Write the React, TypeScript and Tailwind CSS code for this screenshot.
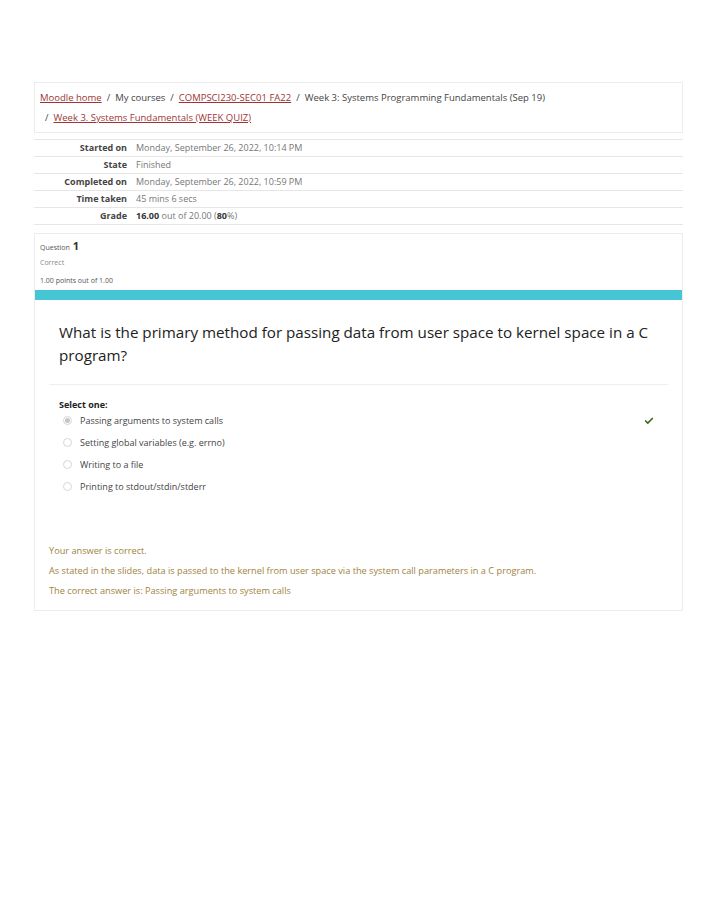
import { Check } from "lucide-react";

const font = { fontFamily: '"Open Sans", "Noto Sans", sans-serif' };

const summary: [string, React.ReactNode][] = [
  ["Started on", "Monday, September 26, 2022, 10:14 PM"],
  ["State", "Finished"],
  ["Completed on", "Monday, September 26, 2022, 10:59 PM"],
  ["Time taken", "45 mins 6 secs"],
  [
    "Grade",
    <>
      <b className="font-bold text-[#333]">16.00</b> out of 20.00 (<b className="font-bold text-[#333]">80</b>%)
    </>,
  ],
];

const options = [
  "Passing arguments to system calls",
  "Setting global variables (e.g. errno)",
  "Writing to a file",
  "Printing to stdout/stdin/stderr",
];

function Radio({ checked }: { checked: boolean }) {
  return (
    <span className="flex h-[9px] w-[9px] items-center justify-center rounded-full border border-[#d6d6d6] bg-white">
      {checked && <span className="h-[5px] w-[5px] rounded-full bg-[#c4c4c4]" />}
    </span>
  );
}

export default function App() {
  return (
    <div className="min-h-[918px] w-[714px] bg-white text-[#4a4a4a]" style={font}>
      <div className="pl-[34px] pr-[31px] pt-[82px]">
        <nav className="border border-[#ececec] px-[5px] pt-[5px] pb-[4px] text-[9.5px] leading-[20px] text-[#444]">
          <div>
            <a className="text-[#9e3535] underline">Moodle home</a>
            <span className="mx-[5px]">/</span>
            My courses
            <span className="mx-[5px]">/</span>
            <a className="text-[#9e3535] underline">COMPSCI230-SEC01 FA22</a>
            <span className="mx-[5px]">/</span>
            Week 3: Systems Programming Fundamentals (Sep 19)
          </div>
          <div>
            <span className="mx-[5px]">/</span>
            <a className="text-[#9e3535] underline">Week 3. Systems Fundamentals (WEEK QUIZ)</a>
          </div>
        </nav>

        <table className="mt-[6px] w-full border-t border-[#e6e6e6] text-[9px]">
          <tbody>
            {summary.map(([k, v]) => (
              <tr key={k} className="h-[17px] border-b border-[#e6e6e6]">
                <th className="w-[102px] pr-[9px] text-right font-bold text-[#444]">{k}</th>
                <td className="text-[#777]">{v}</td>
              </tr>
            ))}
          </tbody>
        </table>

        <div className="mt-[8px] border border-[#ececec]">
          <div className="px-[5px] pt-[6px] pb-[6px] text-[7px] leading-none text-[#555]">
            <div className="flex items-baseline gap-[3px]">
              Question <span className="text-[11px] font-bold text-[#333]">1</span>
            </div>
            <div className="mt-[8px] text-[#888]">Correct</div>
            <div className="mt-[11px]">1.00 points out of 1.00</div>
          </div>
          <div className="h-[10px] bg-[#46c6d5]" />
          <div className="px-[14px] pb-[12px]">
            <div className="px-[10px] pt-[21px] pb-[17px] text-[15.2px] leading-[23px] text-[#222]">
              What is the primary method for passing data from user space to kernel space in a C program?
            </div>
            <div className="border-t border-[#eeeeee] px-[10px] pt-[13px]">
              <div className="text-[9px] font-bold text-[#222]">Select one:</div>
              <div className="-mt-[2px] flex flex-col">
                {options.map((o, i) => (
                  <div key={o} className="flex h-[22px] items-center text-[9px] text-[#444]">
                    <span className="ml-[4px] mr-[8px]">
                      <Radio checked={i === 0} />
                    </span>
                    <span className="flex-1">{o}</span>
                    {i === 0 && <Check className="mr-[4px] h-[10px] w-[10px] text-[#3b6b22]" strokeWidth={4} />}
                  </div>
                ))}
              </div>
            </div>
            <div className="mt-[46px] flex flex-col gap-[6px] text-[9.2px] leading-[14px] text-[#a08440]">
              <div>Your answer is correct.</div>
              <div>As stated in the slides, data is passed to the kernel from user space via the system call parameters in a C program.</div>
              <div>The correct answer is: Passing arguments to system calls</div>
            </div>
          </div>
        </div>
      </div>
    </div>
  );
}
